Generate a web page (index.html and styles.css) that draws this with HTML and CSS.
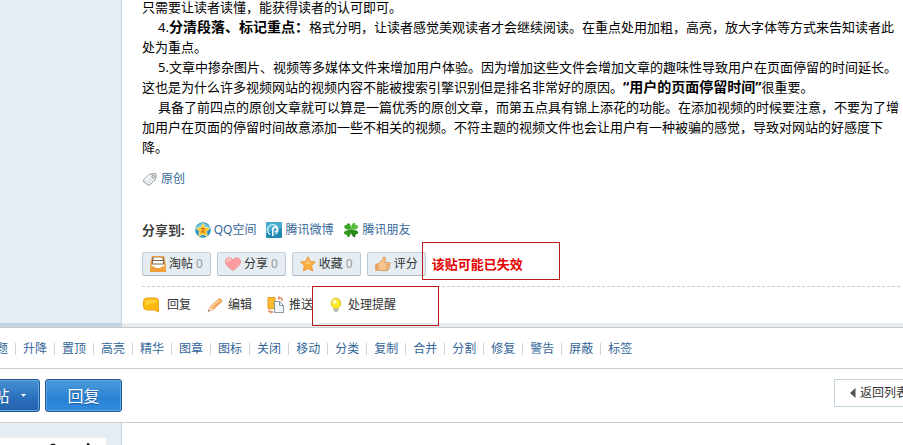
FILE: index.html
```
<!DOCTYPE html>
<html lang="zh-CN">
<head>
<meta charset="UTF-8">
<meta name="viewport" content="width=device-width, initial-scale=1.0">
<title>原创</title>
<link rel="stylesheet" href="styles.css">
</head>
<body>
    <div class="post">
        <div class="side"></div>
        <div class="content">
            <div class="message">
                <p class="continued">只需要让读者读懂，能获得读者的认可即可。</p>
                <p>4.<strong>分清段落、标记重点：</strong>格式分明，让读者感觉美观读者才会继续阅读。在重点处用加粗，高亮，放大字体等方式来告知读者此处为重点。</p>
                <p>5.文章中掺杂图片、视频等多媒体文件来增加用户体验。因为增加这些文件会增加文章的趣味性导致用户在页面停留的时间延长。这也是为什么许多视频网站的视频内容不能被搜索引擎识别但是排名非常好的原因。<strong>“用户的页面停留时间”</strong>很重要。</p>
                <p>具备了前四点的原创文章就可以算是一篇优秀的原创文章，而第五点具有锦上添花的功能。在添加视频的时候要注意，不要为了增加用户在页面的停留时间故意添加一些不相关的视频。不符主题的视频文件也会让用户有一种被骗的感觉，导致对网站的好感度下降。</p>
            </div>
            <div class="tags">
                <svg width="16" height="16" viewBox="0 0 16 16">
                    <path d="M1.500 9 7.500 3 13 2.500Q14.500 2.500 14.300 4L13.500 8.500 8.500 13.500Q7 14.800 5.500 13.800L2 11Q1 10 1.500 9Z" fill="#e3e8eb" stroke="#98a2a8" stroke-linejoin="round"/>
                    <path d="M3 9.500 8 4.500" stroke="#fff" stroke-width="1.500"/>
                    <circle cx="11.300" cy="5.500" r="1.200" fill="#fff" stroke="#7d878d"/>
                </svg>
                <a href="#">原创</a>
            </div>
            <div class="share">
                <b>分享到:</b>
                <a href="#">
                    <svg width="16" height="16" viewBox="0 0 16 16">
                        <circle cx="8" cy="8" r="7.800" fill="#2f94c4"/>
                        <path d="M1 6a7.500 7.500 0 0 1 14 0Z" fill="#79c7dd"/>
                        <path d="M8 1.200 10.100 5.500 15 6.200 11.500 9.600 12.400 14.500 8 12.200 3.600 14.500 4.500 9.600 1 6.200 5.900 5.500Z" fill="#fdc72c" stroke="#fff1a0" stroke-width=".7"/>
                        <path d="M6 6.500H9.500L6.500 10H10" fill="none" stroke="#c65b12"/>
                    </svg>
                    QQ空间
                </a>
                <a href="#">
                    <svg width="16" height="16" viewBox="0 0 16 16">
                        <rect width="16" height="16" rx="1" fill="#2489b3"/>
                        <path d="M0 1Q0 0 1 0H15Q16 0 16 1V6Q8 7 0 12Z" fill="#4aaccd"/>
                        <path d="M4.500 12.500A5.200 5.200 0 1 1 9.500 12.300" fill="none" stroke="#d5f3fb" stroke-width="1.200"/>
                        <path d="M6.800 14V7.500A2.300 2.300 0 1 1 8.500 9.600" fill="none" stroke="#fff" stroke-width="1.600"/>
                    </svg>
                    腾讯微博
                </a>
                <a href="#">
                    <svg width="16" height="16" viewBox="0 0 16 16">
                        <path d="M8 8Q9 13 12 15" fill="none" stroke="#1c6e12" stroke-width="1.500"/>
                        <path d="M8 8C2 8 .5 5.500 1.500 3.800 2.200 2.800 3.300 3 3.600 3.200 3.500 1.500 5.500 .5 6.700 1.800 7.700 3 8 5 8 8Z" fill="#3fa52b"/>
                        <path d="M8 8C8 3 9.500 .5 11.300 1 12.500 1.400 12.700 2.600 12.400 3.200 14.200 2.800 15.600 4 15 5.600 14.300 7.200 12 8 8 8Z" fill="#5cbd3c"/>
                        <path d="M8 8C13 7.500 15.500 9 15.200 10.700 15 12 13.700 12.300 13 12 13.200 13.700 11.500 14.600 10.200 13.600 9 12.700 8.300 11 8 8Z" fill="#2a8a1c"/>
                        <path d="M8 8C8 12.500 7.300 15 5.300 14.900 4 14.700 3.700 13.500 3.800 12.800 2 13 .5 11.800 1 10.300 1.800 8.600 4 8 8 8Z" fill="#35981f"/>
                    </svg>
                    腾讯朋友
                </a>
            </div>
            <div class="buttons">
                <button type="button">
                    <svg width="16" height="16" viewBox="0 0 16 16">
                        <path d="M2 0H14L16 9V16H0V9Z" fill="#efa03a"/>
                        <path d="M2.500 1H13.500L14.500 9H1.500Z" fill="#80694c"/>
                        <path d="M3.500 1.500H12.500V4H3.500ZM3 5H13V7.500H3ZM1.500 8.500H14.500V10.500H11.500L10.500 12H5.500L4.500 10.500H1.500Z" fill="#fff"/>
                    </svg>
                    淘帖<i>0</i>
                </button>
                <button type="button">
                    <svg width="16" height="16" viewBox="0 0 16 16">
                        <path d="M8 14.500C3 11 .5 8.500 .5 5.500 .5 1.500 5.800 .5 8 4 10.200 .5 15.500 1.500 15.500 5.500 15.500 8.500 13 11 8 14.500Z" fill="#fc9c9e" stroke="#ee868b" stroke-width=".8"/>
                        <path d="M2.300 6C2.300 3.500 4.500 2.700 6 4" fill="none" stroke="#ffd5d4" stroke-width="1.600"/>
                    </svg>
                    分享<i>0</i>
                </button>
                <button type="button">
                    <svg width="16" height="16" viewBox="0 0 16 16">
                        <path d="M8 .8 10.200 5.400 15.400 6 11.600 9.700 12.700 15 8 12.400 3.300 15 4.400 9.700 .6 6 5.800 5.400Z" fill="#fbae40" stroke="#f0993a" stroke-linejoin="round"/>
                        <path d="M8 3 9.300 6.400 13 6.800Q8 9 3 6.800L6.700 6.400Z" fill="#fdcb7b"/>
                    </svg>
                    收藏<i>0</i>
                </button>
                <button type="button">
                    <svg width="16" height="16" viewBox="0 0 16 16">
                        <path d="M.8 8.500 4 7.200C6 6 7.500 4 8 1.800 8.300 .4 10.700 .8 10.600 3 10.500 4.500 10 5.500 9.500 6.500H14C15.500 6.500 15.500 8.500 14.300 8.700 15.400 9.200 15 10.800 14 10.900 14.700 11.600 14.300 12.900 13.200 13 13.600 13.800 13 14.700 12 14.700H6.500L4 14 .8 14.500Z" fill="#f5c48c" stroke="#d0904f" stroke-width=".8"/>
                        <path d="M.8 8.500 3.500 7.500V14L.8 14.500Z" fill="#e7a35b"/>
                        <path d="M10.500 8.700H14M10.500 10.900H14M10.500 13H13" stroke="#d39555" stroke-width=".8"/>
                    </svg>
                    评分
                </button>
                <strong class="mark expired">该贴可能已失效</strong>
            </div>
            <div class="actions">
                <a class="reply" href="#">
                    <svg width="18" height="16" viewBox="0 0 18 16">
                        <path d="M5 1H13Q16.500 1 16.500 4V15L12.500 13H5Q1.500 13 1.500 9.500V4.500Q1.500 1 5 1Z" fill="#fdb90f" stroke="#eaa31c"/>
                        <path d="M5 2.500H13Q15 2.500 15 5.500 9 6 3 9V5Q3 2.500 5 2.500Z" fill="#ffd035"/>
                    </svg>
                    回复
                </a>
                <a href="#">
                    <svg width="18" height="16" viewBox="0 0 18 16">
                        <path d="M2.500 14 4 10 12.500 2Q15.500 1 16 4.500L7 12.500Z" fill="#f7ab5c" stroke="#e2924a" stroke-width=".8"/>
                        <path d="M5 10.500 13.500 2.800" stroke="#fdd5a0" stroke-width="1.500"/>
                        <path d="M2 14.500 4 10 7 12.500Z" fill="#f6dfc2"/>
                        <path d="M1.500 15 2.700 12.500 4.300 13.800Z" fill="#8b705e"/>
                    </svg>
                    编辑
                </a>
                <a href="#">
                    <svg width="18" height="18" viewBox="0 0 18 18">
                        <path d="M1 1.500H8V12.500H1Z" fill="#fdbb2e" stroke="#e99c20"/>
                        <path d="M7.500 5.500H12.500L16.500 9.500V16.500H7.500Z" fill="#f3f6f8" stroke="#8b979f"/>
                        <path d="M12.500 5.500V9.500H16.500" fill="none" stroke="#8b979f"/>
                        <path d="M15 5V2H11M12.500 .5 11 2 12.500 3.500M2 13.500V16H5.500M4 14.500 5.500 16 4 17.500" fill="none" stroke="#d9682a"/>
                    </svg>
                    推送
                </a>
                <a class="mark remind" href="#">
                    <svg width="16" height="16" viewBox="0 0 16 16">
                        <path d="M5.500 10.500H10.500V13.500Q8 16 5.500 13.500Z" fill="#a9a9a5"/>
                        <path d="M6 12H10" stroke="#e8e8e4"/>
                        <path d="M8 1A5.400 5.400 0 0 1 10.800 10.600L10 11.300H6L5.200 10.600A5.400 5.400 0 0 1 8 1Z" fill="#fbe92a" stroke="#d9b61e" stroke-width=".8"/>
                        <circle cx="6.700" cy="4.800" r="2" fill="#fffdc8"/>
                    </svg>
                    处理提醒
                </a>
            </div>
        </div>
        <div class="side-end"></div>
        <div class="content-end"></div>
    </div>
    <ul class="manage">
        <li><a href="#">删除主题</a></li>
        <li><a href="#">升降</a></li>
        <li><a href="#">置顶</a></li>
        <li><a href="#">高亮</a></li>
        <li><a href="#">精华</a></li>
        <li><a href="#">图章</a></li>
        <li><a href="#">图标</a></li>
        <li><a href="#">关闭</a></li>
        <li><a href="#">移动</a></li>
        <li><a href="#">分类</a></li>
        <li><a href="#">复制</a></li>
        <li><a href="#">合并</a></li>
        <li><a href="#">分割</a></li>
        <li><a href="#">修复</a></li>
        <li><a href="#">警告</a></li>
        <li><a href="#">屏蔽</a></li>
        <li><a href="#">标签</a></li>
    </ul>
    <div class="toolbar">
        <button type="button" class="newpost">发帖
            <svg width="5" height="3" viewBox="0 0 5 3"><path d="M0 0H5L2.500 3Z" fill="#fff"/></svg>
        </button>
        <button type="button" class="answer">回复</button>
        <a class="back" href="#">
            <svg width="6" height="10" viewBox="0 0 6 10"><path d="M5.500 0V10L0 5Z" fill="#555"/></svg>
            返回列表
        </a>
    </div>
    <div class="post next">
        <div class="side">
            <div class="avatar">
                <svg width="106" height="7" viewBox="0 0 106 7">
                    <path d="M50 7Q53 4 56 7ZM86.500 7 87.500 5H88.500L90 7Z" fill="#111"/>
                </svg>
            </div>
        </div>
        <div class="content"></div>
    </div>
</body>
</html>
```
FILE: styles.css
```
* {
    box-sizing: border-box;
}
body {
    margin: 0;
    min-height: 100vh;
    display: flex;
    flex-direction: column;
    overflow: hidden;
    background-color: #fff;
    color: #333;
    font: 12px/20px "Noto Sans", "Noto Sans CJK SC", sans-serif;
}
a {
    color: #369;
    text-decoration: none;
}
p {
    margin: 0;
}
svg {
    display: block;
    flex: none;
}
button {
    font: inherit;
    color: inherit;
    cursor: pointer;
}

/* 帖子 */
.post {
    display: grid;
    grid-template-columns: 122px 1fr;
}
.side {
    background-color: #e5edf2;
    border-right: 1px solid #c2d5e3;
}
.content {
    padding: 0 3px 0 20px;
}
.side-end {
    height: 4px;
    background-color: #c5d5e1;
}
.content-end {
    height: 4px;
    background-color: #e5edf2;
}
.message {
    margin-top: -3px;
    color: #000;
    font-size: 13px;
}
.message p {
    text-indent: 16px;
}
.message .continued {
    text-indent: 0;
}
.message strong {
    font-size: 14px;
}
.tags {
    display: flex;
    align-items: center;
    gap: 3px;
    margin-top: 12px;
}
.share {
    display: flex;
    align-items: center;
    gap: 10px;
    margin-top: 31px;
}
.share b {
    color: #444;
    font-size: 13px;
}
.share a {
    display: flex;
    align-items: center;
    gap: 3px;
}
.buttons {
    display: flex;
    align-items: center;
    gap: 6px;
    margin-top: 12px;
    padding-bottom: 10px;
    border-bottom: 1px dashed #ccc;
}
.buttons button {
    display: flex;
    align-items: center;
    gap: 3px;
    height: 24px;
    padding: 0 7px;
    border: 1px solid #c2ccd6;
    border-color: #c5d2dc #b9c8d4 #a9b9c8 #b9c8d4;
    border-radius: 2px;
    background-color: #e5edf2;
}
.buttons i {
    color: #999;
    font-style: normal;
}

/* 红框标记 */
.mark {
    position: relative;
}
.mark::after {
    content: "";
    position: absolute;
    border: 1px solid #b81c1c;
    pointer-events: none;
}
.expired {
    color: #e60000;
    font-size: 13px;
}
.expired::after {
    inset: -12px -37px -6px -10px;
}
.remind::after {
    inset: -9px -43px -11px -16px;
}

.actions {
    display: flex;
    align-items: center;
    gap: 15px;
    height: 36px;
}
.actions a {
    display: flex;
    align-items: center;
    gap: 4px;
    color: #333;
}
.actions .reply {
    gap: 7px;
}

/* 管理菜单，左侧超出窗口 */
.manage {
    display: flex;
    align-items: center;
    margin: 0 0 0 -40px;
    padding: 11px 0 9px;
    border: 1px solid #ccc;
    border-width: 1px 0;
    list-style: none;
    white-space: nowrap;
}
.manage li {
    display: flex;
    align-items: center;
}
.manage li + li::before {
    content: "";
    height: 12px;
    margin: 0 7px;
    border-left: 1px solid #ccd5dc;
}

.toolbar {
    display: flex;
    align-items: flex-start;
    gap: 5px;
    margin: 0 -16px 0 -37px;
    padding: 10px 0 10px;
    border-bottom: 1px solid #ccc;
}
.newpost, .answer {
    display: flex;
    align-items: center;
    justify-content: center;
    width: 77px;
    height: 33px;
    padding: 0;
    border: 1px solid #235994;
    border-radius: 3px;
    background-image: linear-gradient(#4b9bdb, #2a82d2 60%, #2f8be0);
    box-shadow: inset 0 0 0 1px #5fa5de;
    color: #fff;
    font-size: 16px;
    text-shadow: 0 1px 1px #1c5a9c;
}
.newpost {
    gap: 11px;
    background-image: linear-gradient(#4690d2, #2a6fbd 60%, #2461ad);
}
.back {
    display: flex;
    align-items: center;
    gap: 4px;
    height: 28px;
    margin-left: auto;
    padding: 0 10px 0 15px;
    border: 1px solid #c5d5de;
    color: #333;
}

.next {
    flex: 1;
}
.avatar {
    margin: 15px 15px 0 0;
    background-color: #fff;
}
```
